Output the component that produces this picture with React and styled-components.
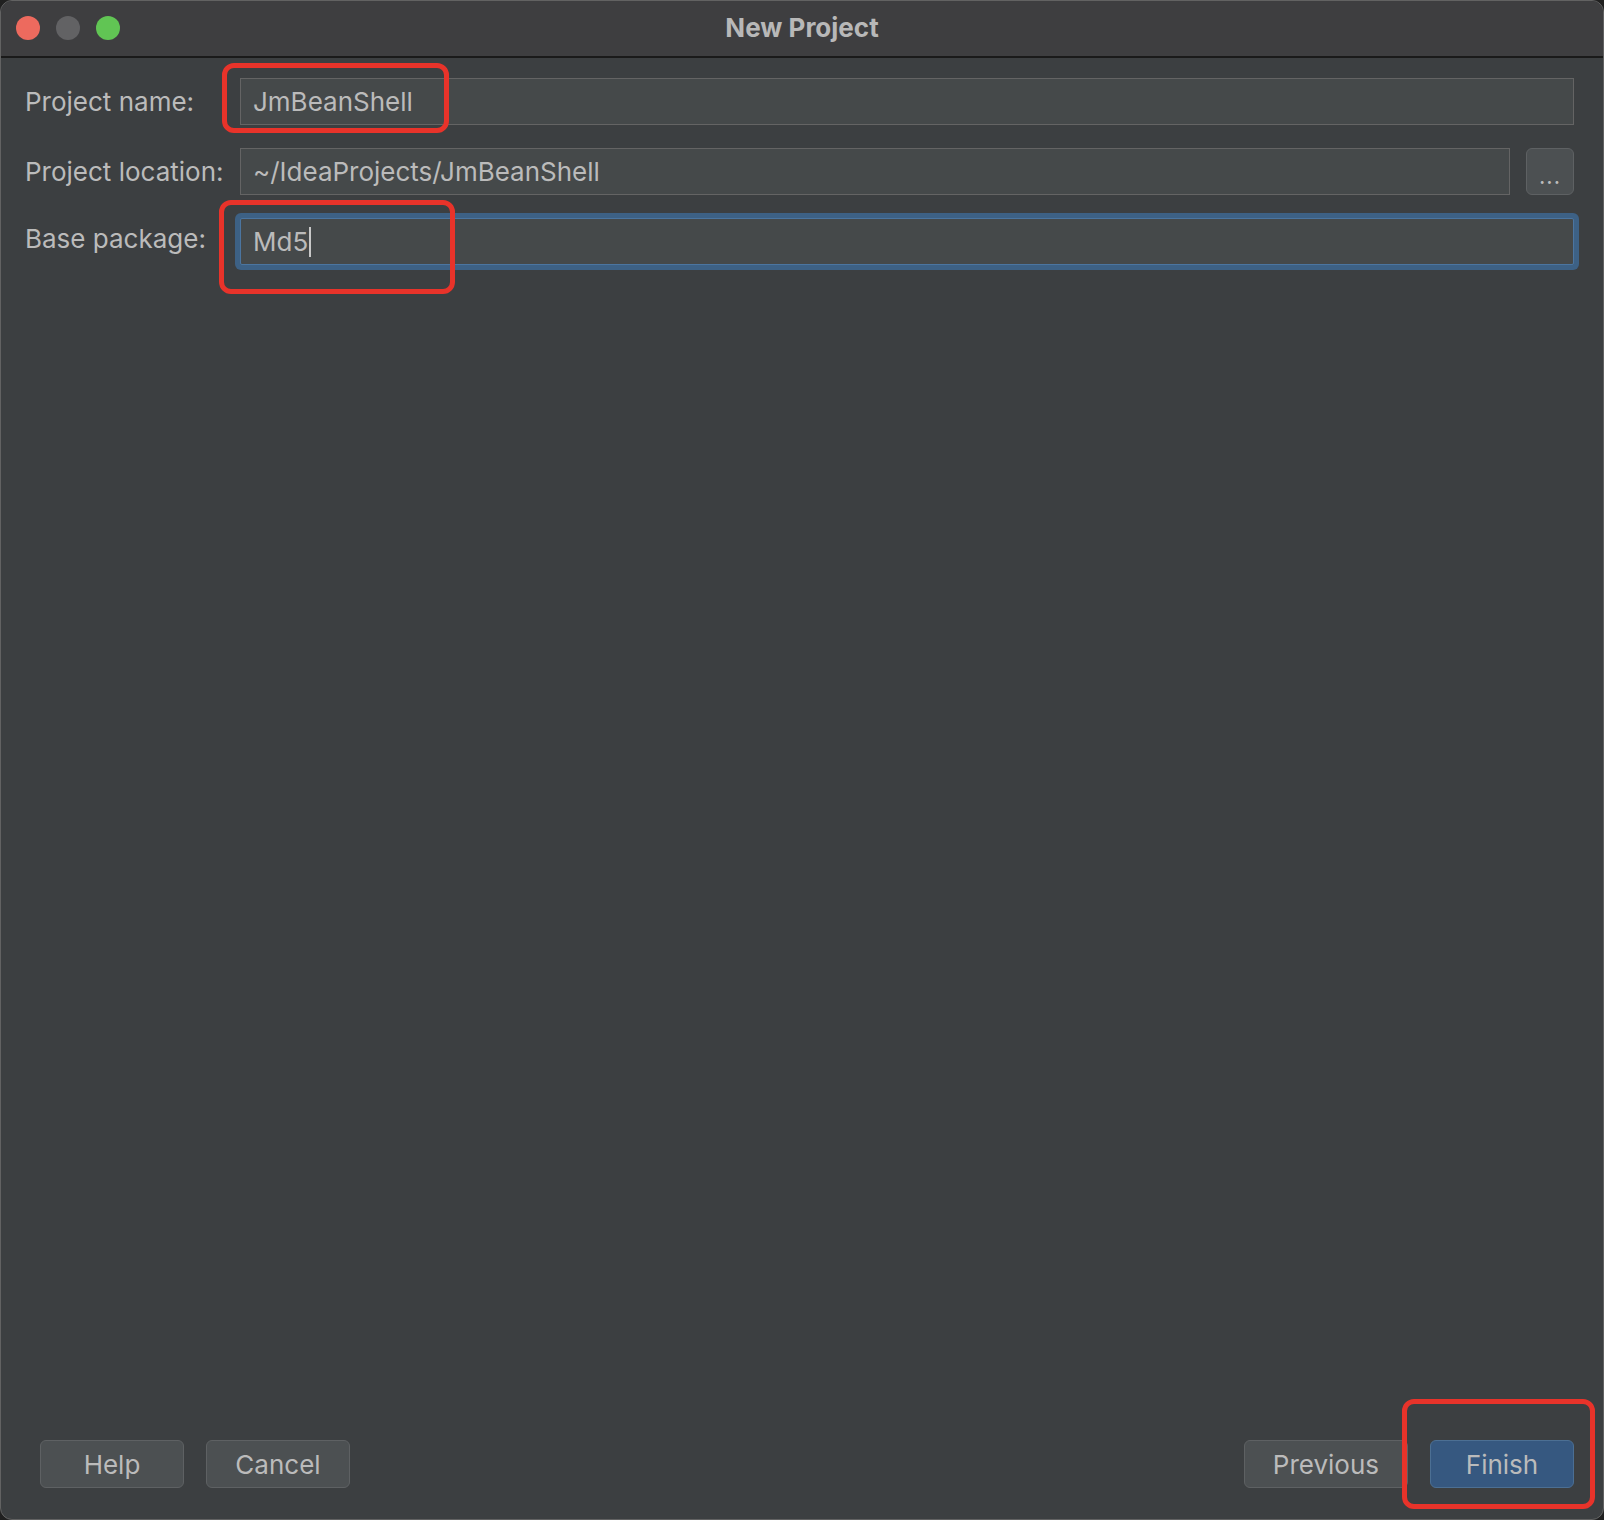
import React from "react";
import styled, { createGlobalStyle } from "styled-components";

const Global = createGlobalStyle`
  html, body { margin: 0; padding: 0; background: #202020; }
  body { font-family: Inter, "Open Sans", "Liberation Sans", sans-serif; }
  * { box-sizing: border-box; }
`;

const Window = styled.div`
  position: relative;
  width: 1604px;
  height: 1520px;
  border: 1px solid #626262;
  border-radius: 12px;
  overflow: hidden;
  background: #3c3f41;
  display: flex;
  flex-direction: column;
`;

const TitleBar = styled.div`
  position: relative;
  height: 57px;
  flex: none;
  background: #3e3e40;
  border-bottom: 2px solid #1a1a1a;
  display: flex;
  align-items: center;
  justify-content: center;
`;

const Lights = styled.div`
  position: absolute;
  left: 15px;
  top: 15px;
  display: flex;
  gap: 16px;
`;

const Light = styled.span`
  width: 24px;
  height: 24px;
  border-radius: 50%;
  background: ${(p) => p.$color};
`;

const Title = styled.div`
  font-size: 26px;
  font-weight: 700;
  color: #b8b8b8;
  margin-top: -3px;
`;

const Body = styled.div`
  flex: 1;
  display: flex;
  flex-direction: column;
  justify-content: space-between;
  padding: 20px 29px 31px 23px;
`;

const Form = styled.div`
  display: grid;
  grid-template-columns: 216px 1fr;
  row-gap: 23px;
  align-items: center;
`;

const Label = styled.label`
  font-size: 26px;
  color: #bbbbbb;
  padding-left: 1px;
  margin-bottom: ${(p) => (p.$lift ? "6px" : "0")};
`;

const FieldRow = styled.div`
  display: flex;
  gap: 16px;
`;

const Field = styled.div`
  flex: 1;
  height: 47px;
  display: flex;
  align-items: center;
  padding-left: 12px;
  background: #45494a;
  border: 1px solid ${(p) => (p.$focused ? "#4b75a0" : "#646464")};
  box-shadow: ${(p) => (p.$focused ? "0 0 0 5px #3d6185" : "none")};
  border-radius: ${(p) => (p.$focused ? "2px" : "0")};
  font-size: 26px;
  color: #bbbbbb;
`;

const Caret = styled.span`
  display: inline-block;
  width: 2px;
  height: 30px;
  background: #c8c8c8;
  margin-left: 1px;
`;

const Browse = styled.button`
  width: 48px;
  height: 47px;
  flex: none;
  background: #4c5052;
  border: 1px solid #5e6163;
  border-radius: 6px;
  color: #bbbbbb;
  font-family: inherit;
  font-size: 22px;
  padding: 8px 0 0;
  letter-spacing: 1px;
`;

const Footer = styled.div`
  display: flex;
  justify-content: space-between;
  padding-left: 16px;
`;

const Group = styled.div`
  display: flex;
  gap: 22px;
`;

const Button = styled.button`
  min-width: 144px;
  height: 48px;
  padding: 0 28px;
  border-radius: 6px;
  border: 1px solid ${(p) => (p.$primary ? "#4c6f93" : "#5e6163")};
  background: ${(p) => (p.$primary ? "#365880" : "#4c5052")};
  color: #bbbbbb;
  font-family: inherit;
  font-size: 26px;
`;

const Mark = styled.div`
  position: absolute;
  border: 5px solid #e8332a;
  border-radius: 12px;
  pointer-events: none;
`;

export default function App() {
  return (
    <>
      <Global />
      <Window>
        <TitleBar>
          <Lights>
            <Light $color="#ed6a5e" />
            <Light $color="#626264" />
            <Light $color="#61c554" />
          </Lights>
          <Title>New Project</Title>
        </TitleBar>
        <Body>
          <Form>
            <Label>Project name:</Label>
            <Field>JmBeanShell</Field>
            <Label>Project location:</Label>
            <FieldRow>
              <Field>~/IdeaProjects/JmBeanShell</Field>
              <Browse>...</Browse>
            </FieldRow>
            <Label $lift>Base package:</Label>
            <Field $focused>
              Md5
              <Caret />
            </Field>
          </Form>
          <Footer>
            <Group>
              <Button>Help</Button>
              <Button>Cancel</Button>
            </Group>
            <Group>
              <Button>Previous</Button>
              <Button $primary>Finish</Button>
            </Group>
          </Footer>
        </Body>
        <Mark style={{ left: 221, top: 62, width: 227, height: 70 }} />
        <Mark style={{ left: 218, top: 199, width: 236, height: 94 }} />
        <Mark style={{ left: 1401, top: 1398, width: 193, height: 110 }} />
      </Window>
    </>
  );
}
